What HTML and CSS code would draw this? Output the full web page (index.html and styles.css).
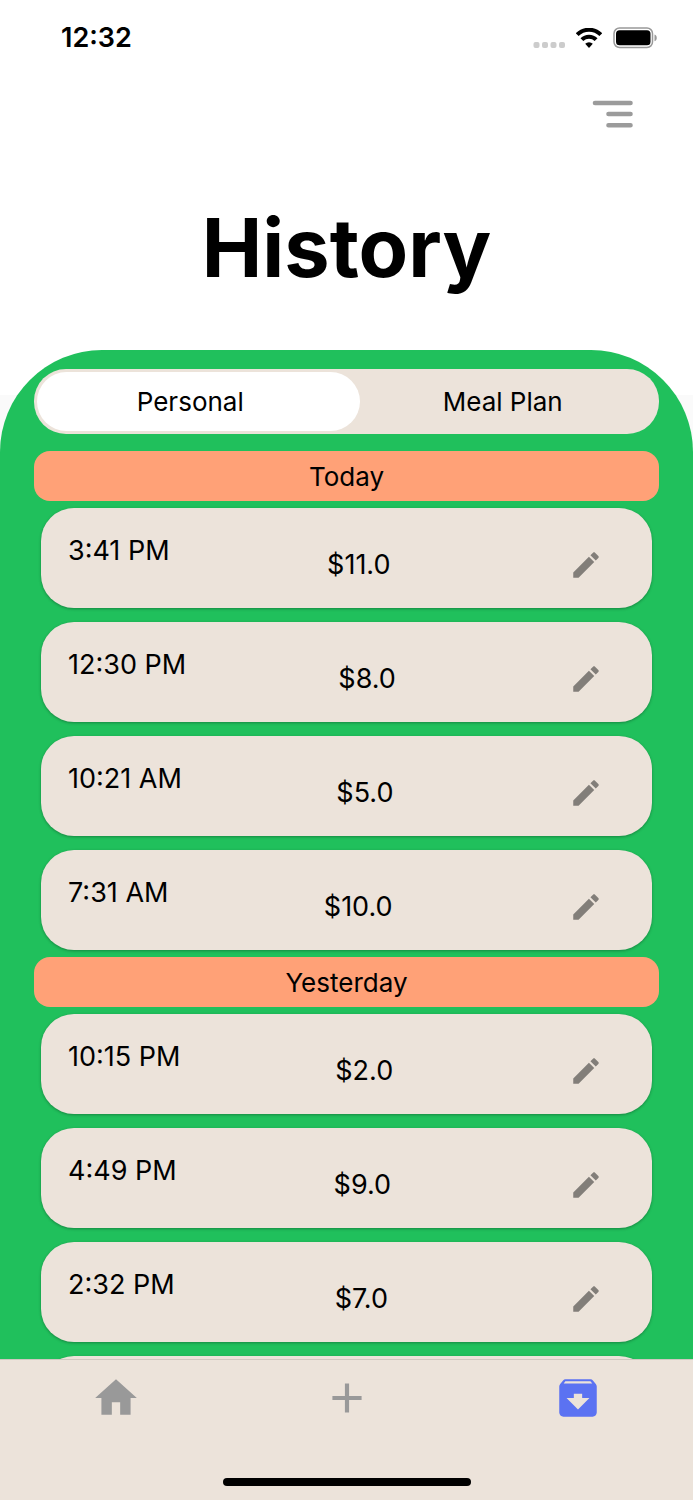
FILE: index.html
```html
<!DOCTYPE html>
<html lang="en">
<head>
    <meta charset="UTF-8">
    <meta name="viewport" content="width=device-width, initial-scale=1.0">
    <title>History</title>
    <link rel="stylesheet" href="styles.css">
</head>
<body>
    <svg class="sprite" aria-hidden="true">
        <symbol id="edit" viewBox="0 0 24 24">
            <path d="M3 17.25V21h3.75L17.81 9.94l-3.75-3.75L3 17.25zM20.71 7.04c.39-.39.39-1.02 0-1.41l-2.34-2.34c-.39-.39-1.02-.39-1.41 0l-1.83 1.83 3.75 3.75 1.83-1.83z"/>
        </symbol>
    </svg>

    <div class="app">
        <div class="status-bar">
            <span class="clock">12:32</span>
            <div class="status-icons">
                <svg width="32" height="20" viewBox="0 0 32 20" fill="#cccccc">
                    <rect x="0.5" y="14" width="6" height="6" rx="2"/>
                    <rect x="9" y="14" width="6" height="6" rx="2"/>
                    <rect x="17.5" y="14" width="6" height="6" rx="2"/>
                    <rect x="26" y="14" width="6" height="6" rx="2"/>
                </svg>
                <svg width="26" height="20" viewBox="0 0 26 20">
                    <path d="M1.2 6.6a16.7 16.7 0 0 1 23.6 0" fill="none" stroke="#000" stroke-width="4"/>
                    <path d="M5.900 11.700a10 10 0 0 1 14.200 0" fill="none" stroke="#000" stroke-width="4"/>
                    <path d="M9.2 15.800a5.4 5.4 0 0 1 7.6 0L13 20z"/>
                </svg>
                <svg width="44" height="22" viewBox="0 0 44 22">
                    <rect x="1" y="1" width="38.5" height="19.5" rx="5.5" fill="none" stroke="#999" stroke-width="1.5"/>
                    <rect x="3" y="3.2" width="34.5" height="15" rx="3.5"/>
                    <path d="M41.5 7.5c3 1 3 5.8 0 6.8z" fill="#999"/>
                </svg>
            </div>
        </div>

        <header class="header">
            <button class="menu-button" aria-label="Menu">
                <svg width="42" height="30" viewBox="0 0 42 30" fill="none" stroke="#9b9b9b" stroke-width="4.6" stroke-linecap="round">
                    <path d="M3 4H38.500M16.500 15H38.500M16.500 26.200H38.500"/>
                </svg>
            </button>
            <h1>History</h1>
        </header>

        <main class="panel">
            <div class="tabs" role="tablist">
                <button class="tab active" role="tab" aria-selected="true"><span>Personal</span></button>
                <button class="tab" role="tab" aria-selected="false"><span>Meal Plan</span></button>
            </div>

            <div class="list">
                <h2 class="day">Today</h2>
                <div class="card">
                    <span class="time">3:41 PM</span>
                    <span class="price">$11.0</span>
                    <button class="edit" aria-label="Edit"><svg><use href="#edit"/></svg></button>
                </div>
                <div class="card">
                    <span class="time">12:30 PM</span>
                    <span class="price">$8.0</span>
                    <button class="edit" aria-label="Edit"><svg><use href="#edit"/></svg></button>
                </div>
                <div class="card">
                    <span class="time">10:21 AM</span>
                    <span class="price">$5.0</span>
                    <button class="edit" aria-label="Edit"><svg><use href="#edit"/></svg></button>
                </div>
                <div class="card">
                    <span class="time">7:31 AM</span>
                    <span class="price">$10.0</span>
                    <button class="edit" aria-label="Edit"><svg><use href="#edit"/></svg></button>
                </div>

                <h2 class="day">Yesterday</h2>
                <div class="card">
                    <span class="time">10:15 PM</span>
                    <span class="price">$2.0</span>
                    <button class="edit" aria-label="Edit"><svg><use href="#edit"/></svg></button>
                </div>
                <div class="card">
                    <span class="time">4:49 PM</span>
                    <span class="price">$9.0</span>
                    <button class="edit" aria-label="Edit"><svg><use href="#edit"/></svg></button>
                </div>
                <div class="card">
                    <span class="time">2:32 PM</span>
                    <span class="price">$7.0</span>
                    <button class="edit" aria-label="Edit"><svg><use href="#edit"/></svg></button>
                </div>
                <div class="card"></div>
            </div>
        </main>

        <footer class="bottom-bar">
            <nav class="nav">
                <a href="#" aria-label="Home">
                    <svg viewBox="0 0 24 24"><path d="M10 20v-6h4v6h5v-8h3L12 3 2 12h3v8z"/></svg>
                </a>
                <a href="#" aria-label="Add">
                    <svg viewBox="0 0 24 24"><path d="M19 13h-6v6h-2v-6H5v-2h6V5h2v6h6v2z"/></svg>
                </a>
                <a href="#" class="current" aria-label="History">
                    <svg viewBox="0 0 24 24"><path d="M20.54 5.23l-1.39-1.68C18.88 3.21 18.47 3 18 3H6c-.47 0-.88.21-1.16.55L3.46 5.23C3.17 5.57 3 6.02 3 6.5V19c0 1.1.9 2 2 2h14c1.1 0 2-.9 2-2V6.5c0-.48-.17-.93-.46-1.27zM12 17.5L6.5 12H10v-2h4v2h3.5L12 17.5zM5.12 5l.81-1h12l.94 1H5.12z"/></svg>
                </a>
            </nav>
            <div class="home-indicator"></div>
        </footer>
    </div>
</body>
</html>
```
FILE: styles.css
```css
* {
    box-sizing: border-box;
}
body {
    margin: 0;
    font-family: Inter, "Liberation Sans", sans-serif;
    font-size: 26px;
    line-height: 32px;
    color: #000;
}
button {
    padding: 0;
    border: none;
    background: none;
    font: inherit;
    color: inherit;
    cursor: pointer;
}
svg {
    display: block;
}
.sprite {
    display: none;
}
.app {
    display: flex;
    flex-direction: column;
    height: 100vh;
    background: linear-gradient(#fff 395px, #fafafa 395px);
}

/* status bar */
.status-bar {
    display: flex;
    justify-content: space-between;
    align-items: center;
    height: 76px;
    padding: 0 36px 0 61px;
}
.clock {
    font-size: 27px;
    font-weight: 600;
}
.status-icons {
    display: flex;
    align-items: center;
    gap: 11px;
}

/* header */
.header {
    display: flex;
    flex-direction: column;
    height: 274px;
    padding: 23px 59px 0;
}
.menu-button {
    align-self: flex-end;
}
h1 {
    margin: 71px 0 0;
    font-size: 81px;
    line-height: 96px;
    font-weight: 700;
    text-align: center;
}

/* green panel */
.panel {
    flex: 1;
    min-height: 0;
    display: flex;
    flex-direction: column;
    padding: 19px 34px 0;
    overflow: hidden;
    background: #20c05c;
    border-radius: 102px 102px 0 0;
}
.tabs {
    display: flex;
    flex: none;
    height: 65px;
    margin-bottom: 17px;
    background: #ece3da;
    border-radius: 32px;
}
.tab {
    position: relative;
    flex: 1;
}
.tab span {
    position: relative;
}
/* white pill behind the selected tab */
.tab.active::before {
    content: "";
    position: absolute;
    inset: 3px -13px 3px 3px;
    background: #fff;
    border-radius: 30px;
}
.list {
    flex: 1;
    min-height: 0;
    overflow: hidden;
}
.day {
    margin: 0;
    padding: 10px 9px 8px;
    background: #ffa177;
    border-radius: 16px;
    font-size: 26px;
    font-weight: 400;
    text-align: center;
}
.card {
    display: flex;
    justify-content: space-between;
    align-items: flex-start;
    height: 100px;
    margin: 7px 7px 14px;
    padding: 27px 28px 0 27px;
    background: #ece3da;
    border-radius: 33px;
    box-shadow: 0 1px 3px rgba(0, 0, 0, 0.3);
    font-size: 27px;
}
.card + .day {
    margin-top: -7px;
}
.price {
    line-height: 60px;
}
.edit {
    display: flex;
    justify-content: center;
    align-items: center;
    width: 76px;
    height: 60px;
}
.edit svg {
    width: 34px;
    height: 34px;
    fill: #827e79;
}

/* bottom navigation */
.bottom-bar {
    height: 141px;
    background: #ece3da;
    border-top: 1px solid #d0c8c0;
}
.nav {
    display: flex;
}
.nav a {
    flex: 1;
    display: flex;
    justify-content: center;
    align-items: center;
    height: 76px;
}
.nav svg {
    width: 50px;
    height: 50px;
    fill: #999;
}
.nav .current svg {
    fill: #5b72f2;
}
.home-indicator {
    width: 248px;
    height: 8px;
    margin: 42px auto 0;
    background: #000;
    border-radius: 4px;
}
```
